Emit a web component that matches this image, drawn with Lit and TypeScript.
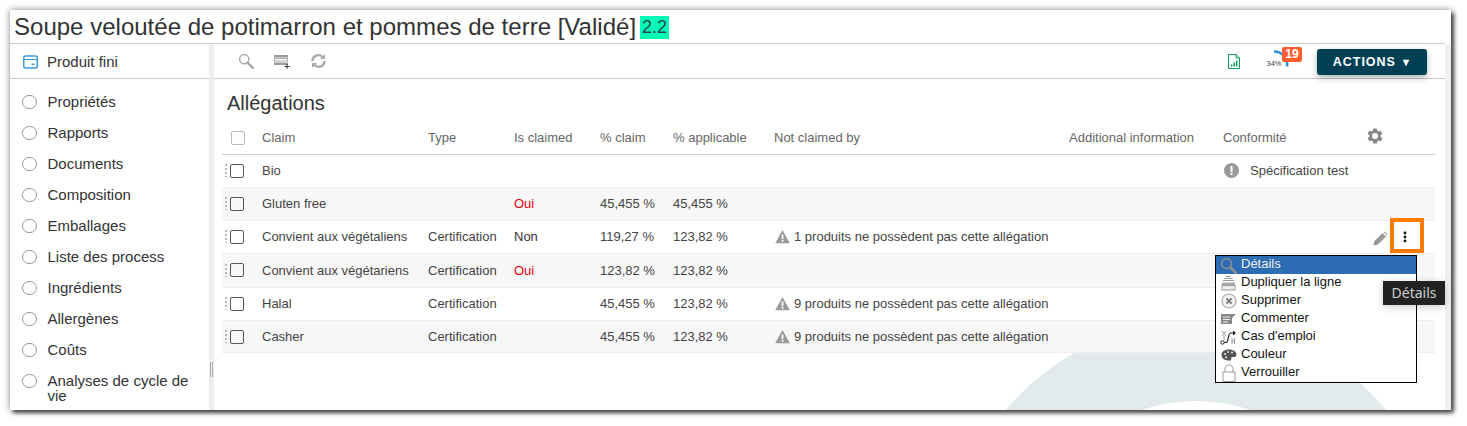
import { LitElement, html, css } from "lit";
import { customElement } from "lit/decorators.js";

const NAV = [
  "Propriétés",
  "Rapports",
  "Documents",
  "Composition",
  "Emballages",
  "Liste des process",
  "Ingrédients",
  "Allergènes",
  "Coûts",
  "Analyses de cycle de vie",
];

const ROWS = [
  { claim: "Bio", type: "", is: "", pc: "", pa: "", not: "", conf: "Spécification test" },
  { claim: "Gluten free", type: "", is: "Oui", pc: "45,455 %", pa: "45,455 %", not: "", conf: "" },
  { claim: "Convient aux végétaliens", type: "Certification", is: "Non", pc: "119,27 %", pa: "123,82 %", not: "1 produits ne possèdent pas cette allégation", conf: "" },
  { claim: "Convient aux végétariens", type: "Certification", is: "Oui", pc: "123,82 %", pa: "123,82 %", not: "", conf: "" },
  { claim: "Halal", type: "Certification", is: "", pc: "45,455 %", pa: "123,82 %", not: "9 produits ne possèdent pas cette allégation", conf: "" },
  { claim: "Casher", type: "Certification", is: "", pc: "45,455 %", pa: "123,82 %", not: "9 produits ne possèdent pas cette allégation", conf: "" },
];

const searchIcon = (c: string, size = 16) => html`<svg width=${size} height=${size} viewBox="0 0 16 16">
  <circle cx="6.2" cy="6.2" r="4.6" fill="none" stroke=${c} stroke-width="1.5" />
  <path d="M9.8 9.8l5 5" stroke=${c} stroke-width="2.6" stroke-linecap="round" />
</svg>`;

const warnIcon = html`<svg width="15" height="15" viewBox="0 0 15 15">
  <path d="M7.5 1 L14.8 14.2 H0.2 Z" fill="#999" />
  <rect x="6.7" y="5.4" width="1.7" height="4.8" fill="#fff" />
  <rect x="6.7" y="11" width="1.7" height="1.7" fill="#fff" />
</svg>`;

const menuIcons = {
  search: searchIcon("#8a8f96", 17),
  copy: html`<svg width="15" height="16" viewBox="0 0 15 16">
    <path d="M5 1.5h5M3.5 3.5h8M2 5.5h11" stroke="#999" stroke-width="1" fill="none" />
    <rect x="1" y="7.5" width="13" height="2.5" fill="#aaa" />
    <rect x="1" y="10.5" width="13" height="4.5" fill="#eee" stroke="#999" />
  </svg>`,
  close: html`<svg width="16" height="16" viewBox="0 0 16 16">
    <circle cx="8" cy="8" r="7" fill="#f4f4f4" stroke="#aaa" stroke-width="1.2" />
    <path d="M5.4 5.4l5.2 5.2M10.6 5.4l-5.2 5.2" stroke="#777" stroke-width="2" />
  </svg>`,
  comment: html`<svg width="15" height="12" viewBox="0 0 15 12">
    <path d="M0 1h15l-4 4v6H0z" fill="#888" />
    <path d="M2 4h7M2 6.5h7M2 9h5" stroke="#eee" stroke-width="1" />
  </svg>`,
  usage: html`<svg width="17" height="16" viewBox="0 0 17 16">
    <path d="M2 2l4 5M6 2L2 7M4 7v4M12 9v6M14.5 9v6M12 12h3" stroke="#999" stroke-width="1" fill="none" />
    <path d="M4 13.5h2c3 0 1.5-9.5 5-9.5h2" fill="none" stroke="#222" stroke-width="1.2" />
    <circle cx="2.5" cy="13.5" r="1.7" fill="#fff" stroke="#222" />
    <path d="M13 1.5l3 2.5-3 2.5z" fill="#222" />
  </svg>`,
  palette: html`<svg width="16" height="12" viewBox="0 0 16 12">
    <path d="M8 0.5c4.5 0 7.5 2.4 7.5 5.2 0 2-2 2.4-3.6 2.2-1.6-.2-2 1-1.6 2 .3 1-.6 1.6-2.3 1.6C3.6 11.5.5 9.3.5 6S3.5.5 8 .5z" fill="#555" />
    <circle cx="4" cy="5" r="1.1" fill="#ddd" />
    <circle cx="7" cy="3" r="1.1" fill="#ddd" />
    <circle cx="11" cy="3.5" r="1.1" fill="#ddd" />
    <circle cx="5" cy="8.3" r="1.1" fill="#ddd" />
  </svg>`,
  lock: html`<svg width="14" height="18" viewBox="0 0 14 18">
    <path d="M3 8V4.5C3 2.5 4.8 1 7 1s4 1.5 4 3.5V8" fill="none" stroke="#999" stroke-width="1" />
    <rect x="1" y="8" width="12" height="9.5" fill="#fff" stroke="#999" />
  </svg>`,
};

const MENU = [
  { icon: menuIcons.search, label: "Détails" },
  { icon: menuIcons.copy, label: "Dupliquer la ligne" },
  { icon: menuIcons.close, label: "Supprimer" },
  { icon: menuIcons.comment, label: "Commenter" },
  { icon: menuIcons.usage, label: "Cas d'emploi" },
  { icon: menuIcons.palette, label: "Couleur" },
  { icon: menuIcons.lock, label: "Verrouiller" },
];

@customElement("app-root")
export class AppRoot extends LitElement {
  static styles = css`
    :host {
      display: block;
      height: 426px;
      background: #fff;
      font-family: "Liberation Sans", Arial, sans-serif;
      font-size: 13px;
      color: #444;
    }
    .page {
      padding: 10px 0 0 10px;
    }
    .window {
      position: relative;
      width: 1441px;
      height: 400px;
      background: #fff;
      display: flex;
      flex-direction: column;
      box-shadow: 3px 3px 4px rgba(0, 0, 0, 0.65), 0 0 7px rgba(0, 0, 0, 0.45);
    }
    .title {
      flex: none;
      height: 33px;
      margin-right: 6px;
      border-bottom: 1px solid #ccc;
      display: flex;
      align-items: center;
      padding-left: 4px;
      font-size: 24.04px;
      color: #333;
      gap: 4px;
    }
    .version {
      background: #00ffb4;
      font-size: 18px;
      line-height: 23px;
      padding: 0 2px;
      margin-top: 2px;
      color: #24465a;
    }
    .body {
      flex: 1;
      display: flex;
      min-height: 0;
    }
    .sidebar {
      flex: none;
      width: 199px;
      color: #333;
    }
    .side-head {
      height: 33px;
      padding-top: 1px;
      border-bottom: 1px solid #ccc;
      display: flex;
      align-items: center;
      gap: 9px;
      padding-left: 13px;
      font-size: 15px;
    }
    nav {
      padding-top: 7px;
    }
    .nav-item {
      display: flex;
      gap: 11px;
      padding: 8px 12px;
      font-size: 15px;
      line-height: 15px;
    }
    .radio {
      flex: none;
      width: 12.5px;
      height: 12.5px;
      border: 1.5px solid #999;
      border-radius: 50%;
      margin-top: 0.5px;
    }
    .splitter {
      flex: none;
      width: 5px;
      background: #eee;
      position: relative;
    }
    .grip {
      position: absolute;
      left: 1px;
      top: 318px;
      width: 1px;
      height: 15px;
      border-left: 1px solid #aaa;
      border-right: 1px solid #aaa;
    }
    .main {
      flex: 1;
      position: relative;
      overflow: hidden;
      min-width: 0;
    }
    .ring {
      position: absolute;
      left: 734px;
      top: 277px;
      width: 496px;
      height: 496px;
      box-sizing: border-box;
      border: 80px solid #e3eaec;
      border-radius: 50%;
    }
    .toolbar {
      height: 34px;
      border-bottom: 1px solid #ccc;
      display: flex;
      align-items: center;
      padding-left: 24px;
      padding-right: 18px;
      position: relative;
    }
    .tools {
      display: flex;
      align-items: center;
      gap: 20px;
    }
    .spacer {
      flex: 1;
    }
    .file {
      margin-right: 25px;
    }
    .progress {
      position: relative;
      width: 34px;
      height: 30px;
      margin-right: 18px;
    }
    .progress svg {
      position: absolute;
      left: 0;
      top: 0;
    }
    .pct {
      position: absolute;
      left: 1.5px;
      top: 13px;
      font-size: 7.5px;
      color: #444;
    }
    .badge {
      position: absolute;
      left: 17px;
      top: 1px;
      width: 20px;
      height: 15px;
      line-height: 15px;
      background: #ff5f2e;
      border-radius: 2px;
      color: #fff;
      font-size: 12px;
      font-weight: bold;
      text-align: center;
    }
    .actions {
      width: 110px;
      height: 26px;
      margin-top: 2px;
      border: none;
      background: #003f54;
      color: #fff;
      border-radius: 3px;
      font: bold 12.5px "Liberation Sans", Arial, sans-serif;
      letter-spacing: 1px;
      box-shadow: 0 3px 6px rgba(0, 0, 0, 0.3);
    }
    .caret {
      font-size: 11px;
      letter-spacing: 0;
    }
    .content {
      position: relative;
      padding: 0 10px 0 8px;
    }
    h2 {
      margin: 0;
      padding-left: 5px;
      height: 46px;
      font-weight: normal;
      font-size: 20px;
      line-height: 48px;
      color: #333;
    }
    .grid {
      display: grid;
      grid-template-columns: 40px 166px 86px 86px 73px 101px 295px 154px 143px 69px;
      align-items: center;
    }
    .head {
      height: 25px;
      padding-bottom: 4px;
      border-bottom: 1px solid #ccc;
      color: #666;
    }
    .row {
      height: 33px;
      box-sizing: border-box;
      padding-bottom: 1px;
      border-bottom: 1px solid #eee;
      background: #fff;
    }
    .row:nth-child(4) {
      height: 34px;
    }
    .row:last-child {
      height: 32px;
      padding-bottom: 0;
    }
    .row:nth-child(even) {
      background: #f7f7f7;
    }
    .sel {
      display: flex;
      align-items: center;
      padding-left: 3px;
    }
    .dots {
      width: 2px;
      height: 13px;
      margin-right: 3px;
      background: repeating-linear-gradient(#bbb 0 2px, transparent 2px 4px);
    }
    .box {
      width: 12px;
      height: 12px;
      border: 1.5px solid #555;
      border-radius: 2px;
      background: #fff;
    }
    .row:nth-child(even) .box {
      background: transparent;
    }
    .head .box {
      border-color: #bbb;
      margin-left: 6px;
    }
    .red {
      color: #e8000d;
    }
    .dark {
      color: #333;
    }
    .note {
      display: flex;
      align-items: center;
      gap: 4px;
      padding-left: 1px;
    }
    .conf {
      display: flex;
      align-items: center;
      gap: 11px;
      padding-left: 1px;
    }
    .strip {
      flex: none;
      width: 6px;
      background: #f0f0f0;
    }
    .edit {
      position: absolute;
      left: 1363px;
      top: 221px;
    }
    .kebab {
      position: absolute;
      left: 1380px;
      top: 208px;
      width: 26px;
      height: 27px;
      box-sizing: content-box;
      border: 4px solid #ff7a00;
      display: flex;
      align-items: center;
      justify-content: center;
    }
    .kebab svg {
      margin: 3px 4px 0 0;
    }
    .menu {
      position: absolute;
      left: 1205px;
      top: 245px;
      width: 200px;
      border: 1px solid #000;
      background: #fff;
      color: #111;
      font-size: 13px;
    }
    .menu-item {
      height: 18px;
      box-sizing: border-box;
      padding-bottom: 3px;
      display: flex;
      align-items: center;
      overflow: hidden;
    }
    .menu-item.active {
      background: #2b6cb3;
      color: #eee;
    }
    .menu-icon {
      flex: none;
      width: 25px;
      display: flex;
      justify-content: center;
      margin-top: 3px;
    }
    .tooltip {
      position: absolute;
      left: 1373px;
      top: 271px;
      width: 62px;
      height: 24px;
      line-height: 24px;
      text-align: center;
      background: #222;
      color: #ccc;
      font-family: "Noto Sans", sans-serif;
      font-size: 14px;
      box-shadow: 0 2px 8px rgba(0, 0, 0, 0.2);
    }
  `;

  private _row(r: (typeof ROWS)[number]) {
    return html`<div class="grid row">
      <div class="sel"><span class="dots"></span><span class="box"></span></div>
      <div>${r.claim}</div>
      <div>${r.type}</div>
      <div class=${r.is === "Oui" ? "red" : "dark"}>${r.is}</div>
      <div>${r.pc}</div>
      <div>${r.pa}</div>
      <div class="note">${r.not ? html`${warnIcon}<span>${r.not}</span>` : ""}</div>
      <div></div>
      <div class="conf">
        ${r.conf
          ? html`<svg width="15" height="15" viewBox="0 0 15 15">
                <circle cx="7.5" cy="7.5" r="7.5" fill="#999" />
                <rect x="6.5" y="3" width="2" height="6" fill="#fff" />
                <rect x="6.5" y="10" width="2" height="2" fill="#fff" />
              </svg>
              <span>${r.conf}</span>`
          : ""}
      </div>
      <div></div>
    </div>`;
  }

  render() {
    return html`<div class="page">
      <div class="window">
        <div class="title">
          <span>Soupe veloutée de potimarron et pommes de terre [Validé]</span>
          <span class="version">2.2</span>
        </div>
        <div class="body">
          <aside class="sidebar">
            <div class="side-head">
              <svg width="15" height="14" viewBox="0 0 15 14">
                <rect x="0.75" y="1" width="13.5" height="12" rx="2" fill="none" stroke="#3b9be0" stroke-width="1.5" />
                <path d="M1 4.5h13" stroke="#3b9be0" stroke-width="1" />
                <rect x="8.5" y="8.5" width="3" height="1.5" fill="#3b9be0" />
              </svg>
              <span>Produit fini</span>
            </div>
            <nav>
              ${NAV.map(
                (n) => html`<div class="nav-item"><span class="radio"></span><span>${n}</span></div>`,
              )}
            </nav>
          </aside>
          <div class="splitter"><div class="grip"></div></div>
          <main class="main">
            <div class="ring"></div>
            <div class="toolbar">
              <div class="tools">
                ${searchIcon("#aaa")}
                <svg width="17" height="15" viewBox="0 0 17 15">
                  <rect x="0" y="1" width="14" height="2.5" fill="#999" />
                  <rect x="0.5" y="4.5" width="13" height="2.5" fill="none" stroke="#aaa" />
                  <rect x="0" y="8.5" width="14" height="2.5" fill="#999" />
                  <path d="M13 10v5M10.5 12.5h5" stroke="#333" stroke-width="1" />
                </svg>
                <svg width="15" height="16" viewBox="0 0 15 16">
                  <path d="M1.5 8a5.8 5.8 0 0 1 10-4M13.5 8a5.8 5.8 0 0 1-10 4" fill="none" stroke="#aaa" stroke-width="2.4" />
                  <path d="M9 6h5V1zM6 10H1v5z" fill="#aaa" />
                </svg>
              </div>
              <div class="spacer"></div>
              <svg class="file" width="12" height="15" viewBox="0 0 12 15">
                <path d="M0.5 0.5h7.5l3.5 3.5v10.5h-11z" fill="#fff" stroke="#0e9a58" />
                <path d="M8 0.5v3.5h3.5" fill="none" stroke="#0e9a58" />
                <rect x="3" y="10.5" width="1.5" height="2" fill="#0e9a58" />
                <rect x="5.5" y="8.5" width="1.5" height="4" fill="#0e9a58" />
                <rect x="8" y="6.5" width="1.5" height="6" fill="#0e9a58" />
              </svg>
              <div class="progress">
                <svg width="34" height="30" viewBox="0 0 34 30">
                  <path d="M9 5.5a13 13 0 0 1 13 15" fill="none" stroke="#2a93d5" stroke-width="2.5" />
                </svg>
                <span class="pct">34%</span>
                <span class="badge">19</span>
              </div>
              <button class="actions">ACTIONS <span class="caret">▼</span></button>
            </div>
            <div class="content">
              <h2>Allégations</h2>
              <div class="grid head">
                <div class="sel"><span class="box"></span></div>
                <div>Claim</div>
                <div>Type</div>
                <div>Is claimed</div>
                <div>% claim</div>
                <div>% applicable</div>
                <div>Not claimed by</div>
                <div>Additional information</div>
                <div>Conformité</div>
                <div>
                  <svg width="18" height="18" viewBox="0 0 24 24">
                    <path fill="#888" d="M19.4 13c.1-.3.1-.7.1-1s0-.7-.1-1l2.1-1.6c.2-.1.2-.4.1-.6l-2-3.5c-.1-.2-.4-.3-.6-.2l-2.5 1c-.5-.4-1.1-.7-1.7-1l-.4-2.6c0-.3-.2-.5-.5-.5h-4c-.3 0-.5.2-.5.5l-.4 2.6c-.6.3-1.2.6-1.7 1l-2.5-1c-.2-.1-.5 0-.6.2l-2 3.5c-.1.2-.1.5.1.6L4.6 11c0 .3-.1.7-.1 1s0 .7.1 1l-2.1 1.6c-.2.1-.2.4-.1.6l2 3.5c.1.2.4.3.6.2l2.5-1c.5.4 1.1.7 1.7 1l.4 2.6c0 .3.2.5.5.5h4c.3 0 .5-.2.5-.5l.4-2.6c.6-.3 1.2-.6 1.7-1l2.5 1c.2.1.5 0 .6-.2l2-3.5c.1-.2.1-.5-.1-.6zM12 16a4 4 0 1 1 0-8 4 4 0 0 1 0 8z"/>
                  </svg>
                </div>
              </div>
              <div class="rows">${ROWS.map((r) => this._row(r))}</div>
            </div>
          </main>
          <div class="strip"></div>
        </div>

        <svg class="edit" width="15" height="15" viewBox="0 0 15 15">
          <path d="M0.5 14.5l1-4.5 8-8 3.5 3.5-8 8z" fill="#999" />
          <path d="M10.5 1l1-.5 3 3-.5 1z" fill="#999" />
        </svg>
        <div class="kebab">
          <svg width="4" height="12" viewBox="0 0 4 12">
            <circle cx="2" cy="2" r="1.4" fill="#111" />
            <circle cx="2" cy="6" r="1.4" fill="#111" />
            <circle cx="2" cy="10" r="1.4" fill="#111" />
          </svg>
        </div>
        <div class="menu">
          ${MENU.map(
            (m, i) => html`<div class="menu-item ${i === 0 ? "active" : ""}">
              <span class="menu-icon">${m.icon}</span><span>${m.label}</span>
            </div>`,
          )}
        </div>
        <div class="tooltip">Détails</div>
      </div>
    </div>`;
  }
}
